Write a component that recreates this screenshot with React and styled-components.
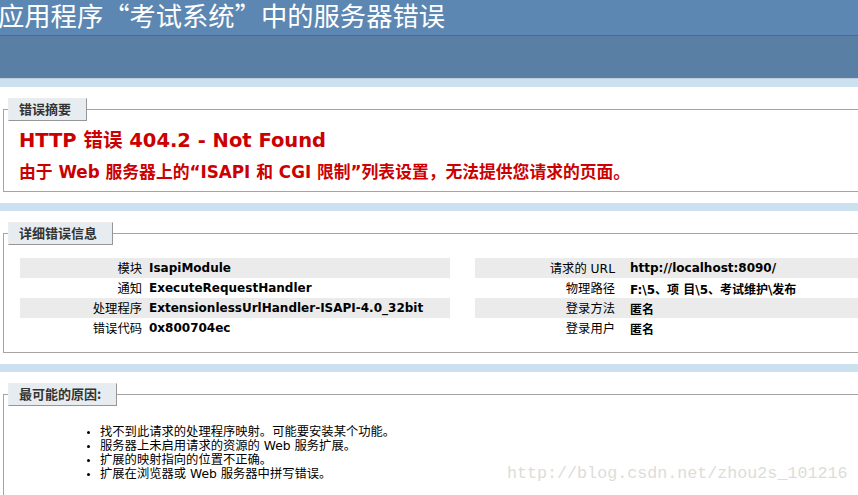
import React from "react";
import styled, { createGlobalStyle } from "styled-components";

const Global = createGlobalStyle`
  html, body { margin: 0; padding: 0; }
  html { overflow: hidden; }
  body {
    background: #CBE1EF;
    font-family: "DejaVu Sans", Verdana, "Noto Sans CJK SC", sans-serif;
    font-size: 11.2px;
    color: #000;
  }
`;

const Page = styled.div`
  position: relative;
  width: 900px;
  height: 495px;
  overflow: hidden;
`;

const Header = styled.header`
  height: 35px;
  background: #5C87B2;
  overflow: hidden;
`;

const Title = styled.h1`
  margin: 0 0 0 -2px;
  font-family: "Noto Sans CJK SC", sans-serif;
  font-weight: 400;
  font-size: 26.3px;
  line-height: 29px;
  color: #FFF;
  white-space: nowrap;
`;

const ServerBar = styled.div`
  height: 42px;
  background: #5A7FA5;
  border-top: 1px solid #4A6C8E;
  border-bottom: 1px solid #C1CFDD;
`;

const Container = styled.section`
  background: #FFF;
  margin-top: 8px;
  padding: 11px 0 11px 3px;
`;

const Fieldset = styled.fieldset`
  margin: 0;
  padding: 0 15px ${(p) => p.$pb}px 15px;
  border: 1px solid #A5A5A5;
  min-width: 0;
`;

const Legend = styled.legend`
  margin: 0 0 0 -11px;
  padding: 2px 15px 3px 10px;
  border-top: 1px solid #EDEDED;
  border-left: 1px solid #EDEDED;
  border-right: 1px solid #969696;
  border-bottom: 1px solid #969696;
  background: #E7ECF0;
  color: #333333;
  font-weight: bold;
  font-size: 13px;
  line-height: 16px;
  font-family: "Noto Sans CJK SC", sans-serif;
`;

const ErrTitle = styled.h2`
  margin: 8px 0 0 0;
  font-size: 19.5px;
  line-height: 23px;
  font-weight: bold;
  color: #CC0000;
  white-space: nowrap;
`;

const ErrSub = styled.h3`
  margin: 10px 0 0 0;
  font-size: 16.8px;
  line-height: 20px;
  font-weight: bold;
  color: #CC0000;
  white-space: nowrap;
`;

const Details = styled.div`
  display: flex;
  gap: 25px;
  margin-top: 13px;
  padding-left: 1px;
`;

const Table = styled.div`
  width: ${(p) => p.$w}px;
  flex: none;
`;

const Row = styled.div`
  display: grid;
  grid-template-columns: ${(p) => p.$label}px 1fr;
  column-gap: ${(p) => p.$gap}px;
  height: 20px;
  align-items: center;
  background: ${(p) => (p.$alt ? "#EBEBEB" : "transparent")};
`;

const Label = styled.span`
  text-align: right;
  font-size: 12.3px;
  white-space: nowrap;
  color: #000;
`;

const Value = styled.span`
  font-weight: bold;
  font-size: 12px;
  white-space: nowrap;
  color: #000;
`;

const Causes = styled.ul`
  margin: 19px 0 30px 0;
  padding-left: 81px;
  list-style: disc;
  font-size: 12.3px;
  line-height: 14px;
`;

const Cause = styled.li`
  white-space: nowrap;
  &::marker { font-size: 10px; }
`;

const Watermark = styled.div`
  position: absolute;
  left: 507px;
  top: 464px;
  font-family: "Liberation Mono", monospace;
  font-size: 16.7px;
  color: #DDDDD8;
  white-space: nowrap;
  pointer-events: none;
`;

const left = [
  ["模块", "IsapiModule"],
  ["通知", "ExecuteRequestHandler"],
  ["处理程序", "ExtensionlessUrlHandler-ISAPI-4.0_32bit"],
  ["错误代码", "0x800704ec"],
];

const right = [
  ["请求的 URL", "http://localhost:8090/"],
  ["物理路径", "F:\\5、项 目\\5、考试维护\\发布"],
  ["登录方法", "匿名"],
  ["登录用户", "匿名"],
];

const causes = [
  "找不到此请求的处理程序映射。可能要安装某个功能。",
  "服务器上未启用请求的资源的 Web 服务扩展。",
  "扩展的映射指向的位置不正确。",
  "扩展在浏览器或 Web 服务器中拼写错误。",
];

export default function App() {
  return (
    <Page>
      <Global />
      <Header>
        <Title>应用程序“考试系统”中的服务器错误</Title>
      </Header>
      <ServerBar />
      <Container>
        <Fieldset $pb={9}>
          <Legend>错误摘要</Legend>
          <ErrTitle>HTTP 错误 404.2 - Not Found</ErrTitle>
          <ErrSub>由于 Web 服务器上的“ISAPI 和 CGI 限制”列表设置，无法提供您请求的页面。</ErrSub>
        </Fieldset>
      </Container>
      <Container>
        <Fieldset $pb={14}>
          <Legend>详细错误信息</Legend>
          <Details>
            <Table $w={430}>
              {left.map(([l, v], i) => (
                <Row key={l} $alt={i % 2 === 0} $label={122} $gap={7}>
                  <Label>{l}</Label>
                  <Value>{v}</Value>
                </Row>
              ))}
            </Table>
            <Table $w={430}>
              {right.map(([l, v], i) => (
                <Row key={l} $alt={i % 2 === 0} $label={140} $gap={15}>
                  <Label>{l}</Label>
                  <Value>{v}</Value>
                </Row>
              ))}
            </Table>
          </Details>
        </Fieldset>
      </Container>
      <Container>
        <Fieldset $pb={10}>
          <Legend>最可能的原因:</Legend>
          <Causes>
            {causes.map((c) => (
              <Cause key={c}>{c}</Cause>
            ))}
          </Causes>
        </Fieldset>
      </Container>
      <Watermark>http://blog.csdn.net/zhou2s_101216</Watermark>
    </Page>
  );
}
